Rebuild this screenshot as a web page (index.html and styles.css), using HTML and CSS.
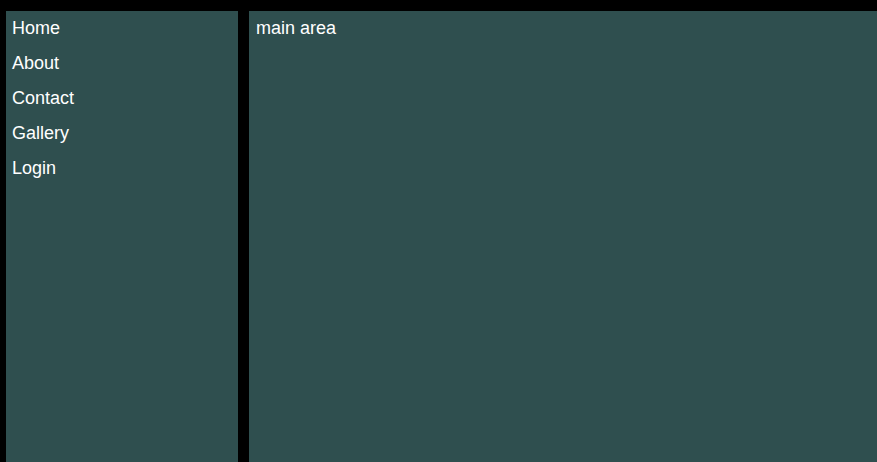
FILE: index.html
```html
<!DOCTYPE html>
<html>
<head>
<meta charset="utf-8">
<link rel="stylesheet" href="styles.css">
</head>
<body>
<div class="layout">
  <nav class="sidebar">
    <ul class="menu">
      <li>Home</li>
      <li>About</li>
      <li>Contact</li>
      <li>Gallery</li>
      <li>Login</li>
    </ul>
  </nav>
  <main class="main">main area</main>
</div>
</body>
</html>
```
FILE: styles.css
```css
html, body {
  margin: 0;
  padding: 0;
  height: 100%;
  background: #000;
}
body {
  font-family: "Liberation Sans", Arial, sans-serif;
  font-size: 18px;
  color: #fff;
  overflow: hidden;
}
.layout {
  display: flex;
  gap: 11px;
  padding: 11px 0 0 6px;
  height: 100vh;
  box-sizing: border-box;
}
.sidebar {
  width: 232px;
  flex: none;
  background: #2f4f4f;
  padding: 0 6px;
  box-sizing: border-box;
}
.menu {
  list-style: none;
  margin: 0;
  padding: 0;
}
.menu li {
  line-height: 35px;
}
.main {
  flex: 1;
  background: #2f4f4f;
  padding: 0 7px;
  line-height: 35px;
}
```
